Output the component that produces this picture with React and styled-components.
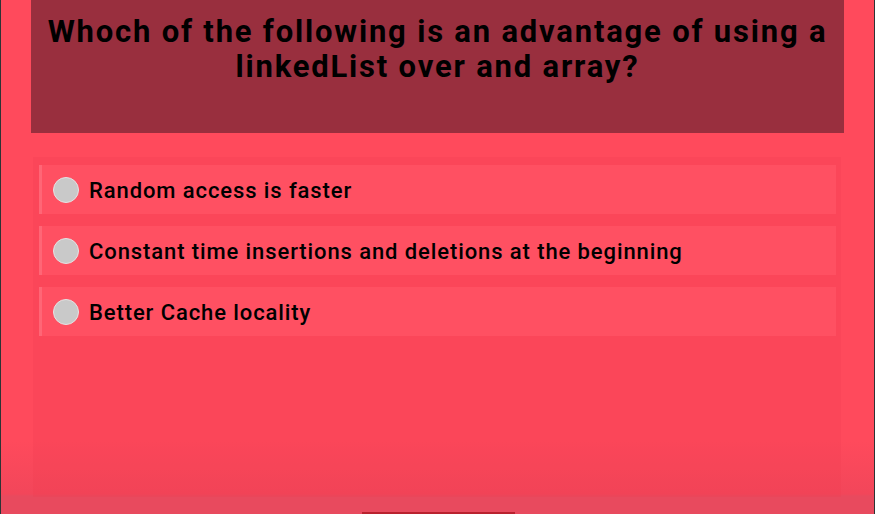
import React from "react";
import styled, { createGlobalStyle } from "styled-components";

const Global = createGlobalStyle`
  html, body { margin: 0; padding: 0; background: #ff4a5c; }
  body { font-family: Roboto, "Liberation Sans", sans-serif; }
`;

const Page = styled.div`
  box-sizing: border-box;
  width: 875px;
  height: 514px;
  border-left: 1px solid #2d3436;
  border-right: 1px solid #2d3436;
  padding: 0 30px;
  display: flex;
  flex-direction: column;
  background: linear-gradient(
    to bottom,
    #ff4a5c 0px,
    #ff4a5c 440px,
    #f2465a 494px,
    #e84a5e 496px,
    #e84a5e 514px
  );
  overflow: hidden;
`;

const Header = styled.div`
  height: 133px;
  background: #992f3e;
  box-sizing: border-box;
  padding: 14px 10px 0;
  text-align: center;
  color: #000;
  font-family: Roboto, "Liberation Sans", sans-serif;
  font-weight: 700;
  font-size: 31px;
  line-height: 35px;
  letter-spacing: 1.8px;
`;

const Panel = styled.div`
  margin: 24px 3px 0 2px;
  height: 340px;
  box-sizing: border-box;
  background: rgba(240, 60, 80, 0.25);
  padding: 8px 5px 8px 6px;
  display: flex;
  flex-direction: column;
  gap: 12px;
`;

const Option = styled.div`
  height: ${(p) => p.h}px;
  background: #ff5062;
  border-left: 3px solid rgba(255, 255, 255, 0.13);
  display: flex;
  align-items: center;
  gap: 10px;
  padding-left: 11px;
`;

const Radio = styled.span`
  width: 24px;
  height: 24px;
  border-radius: 50%;
  background: #c9c9c9;
  border: 1px solid #e4e4e4;
  flex: none;
`;

const Label = styled.span`
  font-family: Roboto, "Liberation Sans", sans-serif;
  font-size: 22px;
  font-weight: 500;
  letter-spacing: 0.9px;
  color: #000;
  padding-top: 1px;
`;

const Footer = styled.div`
  flex: 1;
  display: flex;
  justify-content: center;
  align-items: flex-end;
  padding-left: 2px;
`;

const Bar = styled.div`
  width: 153px;
  height: 2px;
  background: #b9222f;
`;

const options = [
  { text: "Random access is faster", h: 49 },
  { text: "Constant time insertions and deletions at the beginning", h: 49 },
  { text: "Better Cache locality", h: 49 },
];

export default function App() {
  return (
    <>
      <Global />
      <Page>
        <Header>
          Whoch of the following is an advantage of using a linkedList over and array?
        </Header>
        <Panel>
          {options.map((o) => (
            <Option key={o.text} h={o.h}>
              <Radio />
              <Label>{o.text}</Label>
            </Option>
          ))}
        </Panel>
        <Footer>
          <Bar />
        </Footer>
      </Page>
    </>
  );
}
